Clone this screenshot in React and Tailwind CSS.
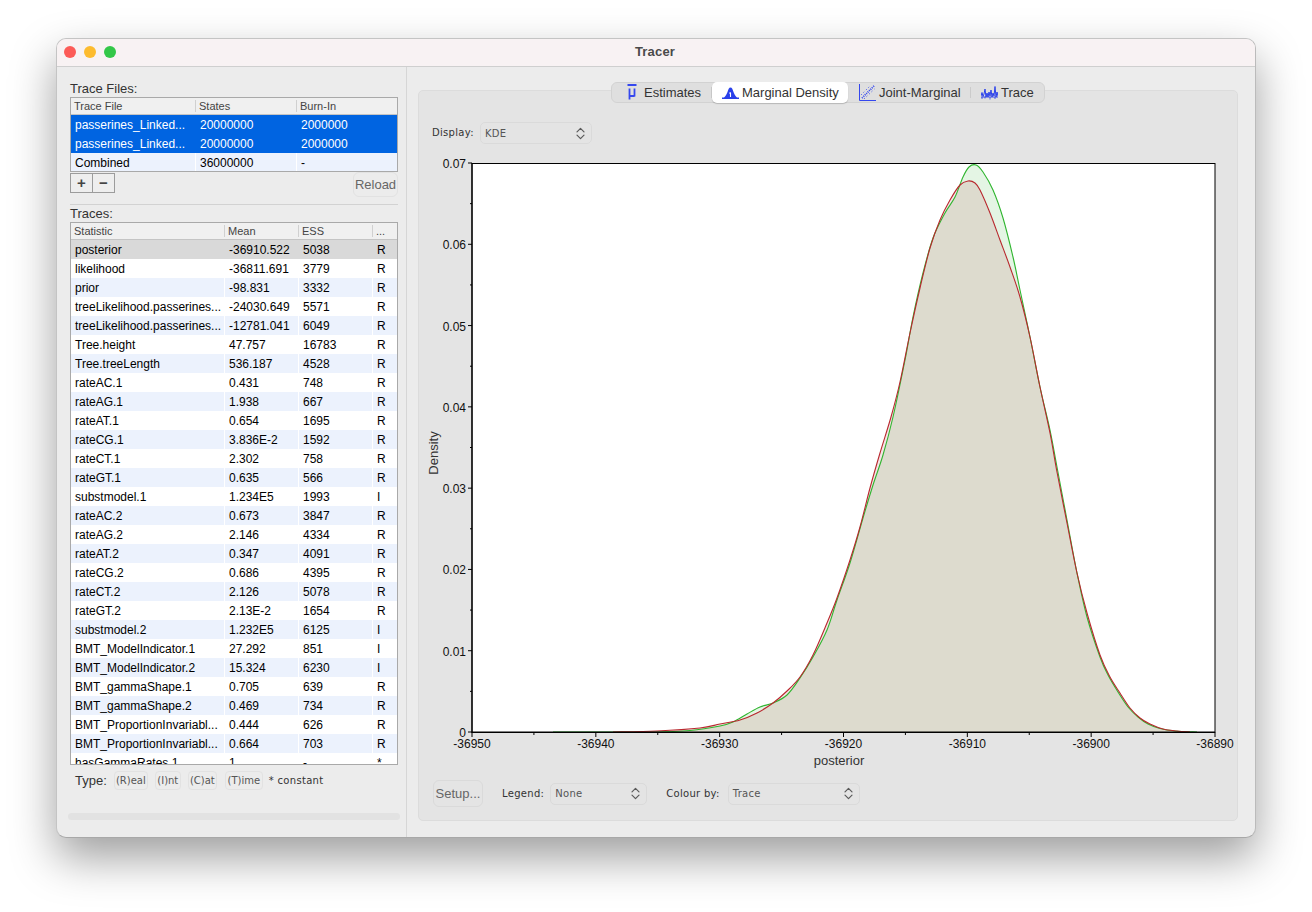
import { Fragment } from 'react'

const FILES = [
  ['passerines_Linked...', '20000000', '2000000'],
  ['passerines_Linked...', '20000000', '2000000'],
  ['Combined', '36000000', '-'],
]

const TRACES = [
  ['posterior', '-36910.522', '5038', 'R'],
  ['likelihood', '-36811.691', '3779', 'R'],
  ['prior', '-98.831', '3332', 'R'],
  ['treeLikelihood.passerines...', '-24030.649', '5571', 'R'],
  ['treeLikelihood.passerines...', '-12781.041', '6049', 'R'],
  ['Tree.height', '47.757', '16783', 'R'],
  ['Tree.treeLength', '536.187', '4528', 'R'],
  ['rateAC.1', '0.431', '748', 'R'],
  ['rateAG.1', '1.938', '667', 'R'],
  ['rateAT.1', '0.654', '1695', 'R'],
  ['rateCG.1', '3.836E-2', '1592', 'R'],
  ['rateCT.1', '2.302', '758', 'R'],
  ['rateGT.1', '0.635', '566', 'R'],
  ['substmodel.1', '1.234E5', '1993', 'I'],
  ['rateAC.2', '0.673', '3847', 'R'],
  ['rateAG.2', '2.146', '4334', 'R'],
  ['rateAT.2', '0.347', '4091', 'R'],
  ['rateCG.2', '0.686', '4395', 'R'],
  ['rateCT.2', '2.126', '5078', 'R'],
  ['rateGT.2', '2.13E-2', '1654', 'R'],
  ['substmodel.2', '1.232E5', '6125', 'I'],
  ['BMT_ModelIndicator.1', '27.292', '851', 'I'],
  ['BMT_ModelIndicator.2', '15.324', '6230', 'I'],
  ['BMT_gammaShape.1', '0.705', '639', 'R'],
  ['BMT_gammaShape.2', '0.469', '734', 'R'],
  ['BMT_ProportionInvariabl...', '0.444', '626', 'R'],
  ['BMT_ProportionInvariabl...', '0.664', '703', 'R'],
  ['hasGammaRates.1', '1', '-', '*'],
]

const GREEN = [
  [553, 732], [653, 732], [690, 730.5], [720, 726], [733, 722], [747, 714], [760, 707], [773, 703],
  [787, 695], [800, 678], [813, 657], [827, 630], [837, 600], [850, 563], [863, 518], [873, 485],
  [883, 455], [893, 417], [905, 360], [913, 317], [923, 273], [933, 238], [945, 213], [955, 197],
  [963, 177], [969, 167], [976, 165], [983, 172], [993, 190], [1003, 218], [1013, 257], [1020, 290],
  [1030, 337], [1040, 387], [1050, 430], [1057, 467], [1067, 520], [1077, 573], [1087, 617],
  [1100, 657], [1108, 675], [1118, 692], [1128, 707], [1138, 717], [1148, 724], [1160, 728.5],
  [1175, 731], [1197, 732],
]

const RED = [
  [613, 732], [657, 731], [700, 728], [720, 724], [740, 720], [757, 713], [773, 703], [787, 691],
  [800, 677], [813, 655], [827, 623], [837, 598], [850, 560], [860, 527], [870, 488], [880, 453],
  [891, 417], [900, 382], [910, 333], [920, 288], [930, 248], [940, 220], [950, 200], [960, 185],
  [968, 181], [975, 183], [980, 190], [990, 213], [1000, 240], [1010, 267], [1020, 297], [1030, 337],
  [1040, 387], [1050, 433], [1057, 472], [1067, 523], [1077, 573], [1087, 613], [1100, 655],
  [1110, 677], [1120, 693], [1130, 708], [1140, 718], [1150, 724], [1163, 729], [1177, 731], [1190, 732],
]

// catmull-rom through the sampled points
function smooth(pts) {
  let d = `M${pts[0][0]} ${pts[0][1]}`
  for (let i = 0; i < pts.length - 1; i++) {
    const p0 = pts[i - 1] || pts[i]
    const p1 = pts[i]
    const p2 = pts[i + 1]
    const p3 = pts[i + 2] || p2
    const c1x = p1[0] + (p2[0] - p0[0]) / 6
    const c1y = p1[1] + (p2[1] - p0[1]) / 6
    const c2x = p2[0] - (p3[0] - p1[0]) / 6
    const c2y = p2[1] - (p3[1] - p1[1]) / 6
    d += `C${c1x} ${c1y} ${c2x} ${c2y} ${p2[0]} ${p2[1]}`
  }
  return d
}

const X_TICKS = [-36950, -36940, -36930, -36920, -36910, -36900, -36890]
const xPos = v => 472 + ((v + 36950) / 60) * 743
const yPos = v => 732 - (v / 0.07) * 569

function Chevrons() {
  return (
    <svg width="9" height="13" viewBox="0 0 9 13" fill="none" stroke="#5a5a5a" strokeWidth="1.2" strokeLinecap="round" strokeLinejoin="round">
      <path d="M1 4.8 4.5 1.3 8 4.8" />
      <path d="M1 8.2 4.5 11.7 8 8.2" />
    </svg>
  )
}

function Select({ value, className }) {
  return (
    <div className={`flex h-[22px] items-center justify-between rounded-[5px] border border-[#dadada] pl-[4px] pr-[6px] font-['DejaVu_Sans',sans-serif] text-[10px] tracking-[0.3px] text-[#555] ${className}`}>
      <span>{value}</span>
      <Chevrons />
    </div>
  )
}

function Small({ children }) {
  return <span className="block font-['DejaVu_Sans',sans-serif] text-[10px] leading-[14px] tracking-[0.3px] text-[#333]">{children}</span>
}

function TypeBtn({ label, w }) {
  return (
    <div className={`flex h-[19px] items-center justify-center rounded-[4px] border border-[#e2e2e2] font-['DejaVu_Sans',sans-serif] text-[10px] text-[#555] ${w}`}>
      {label}
    </div>
  )
}

function HeaderRow({ cols, labels }) {
  return (
    <div className="flex h-[17px] shrink-0 border-b border-[#c4c4c4] bg-[#f0f0f0] text-[11px] text-[#444]">
      {labels.map((l, i) => (
        <div key={i} className={`flex items-center pl-[3px] ${cols[i]} ${i < labels.length - 1 ? 'relative' : ''}`}>
          {l}
          {i < labels.length - 1 && <span className="absolute right-0 top-[2px] h-[12px] w-px bg-[#d0d0d0]" />}
        </div>
      ))}
    </div>
  )
}

function Row({ cols, cells, tone }) {
  const bg = tone === 'blue' ? 'bg-[#0064e1] text-white' : tone === 'sel' ? 'bg-[#d9d9d9] text-black' : tone === 'alt' ? 'bg-[#ecf2fd] text-black' : 'bg-white text-black'
  const sep = tone === 'alt' || tone === 'plain' ? 'border-r border-white' : ''
  return (
    <div className={`flex h-[19px] shrink-0 items-center text-[12px] ${bg}`}>
      {cells.map((c, i) => (
        <div key={i} className={`flex h-full items-center whitespace-nowrap pl-[4px] ${cols[i]} ${i < cells.length - 1 ? sep : ''}`}>
          {c}
        </div>
      ))}
    </div>
  )
}

function MuIcon() {
  return (
    <svg width="10" height="17" viewBox="0 0 10 17" fill="none" stroke="#3548ee">
      <path d="M0.5 1H9.5" strokeWidth="2" />
      <path d="M2.5 4.5V15.5M7.5 4.5V12.5M2.5 12H7.5" strokeWidth="1.8" />
    </svg>
  )
}

function DensityIcon() {
  return (
    <svg width="17" height="12" viewBox="0 0 17 12">
      <path d="M0 10.5H2C3.5 9.5 4.5 7.5 5.5 5 6.3 2.5 7 0.5 8.5 0.5 10 0.5 10.7 2.5 11.5 5 12.5 7.5 13.5 9.5 15 10.5H17V12H0Z" fill="#2a40ea" />
      <path d="M8.5 5.5V10M7.5 6.5 8.5 5.5" stroke="#fff" strokeWidth="1.1" fill="none" />
    </svg>
  )
}

function JointIcon() {
  return (
    <svg width="17" height="17" viewBox="0 0 17 17" fill="none" stroke="#3548ee">
      <path d="M0.5 0V16.5H17" strokeWidth="1" />
      <path d="M3 14 15.5 1.5" strokeWidth="1.8" strokeDasharray="1 1" />
      <path d="M5 15 15.5 5M2 11 11 2" strokeWidth="1" strokeDasharray="1 2.5" />
    </svg>
  )
}

function TraceIcon() {
  return (
    <svg width="17" height="14" viewBox="0 0 17 14" fill="none" stroke="#2a40ea" strokeWidth="1">
      <path d="M0 10 1 6.5 2 10.5 3 8 4 3 5 11 6 7 7 11 8 6 9 10 10 4 11 11 12 7 13 10 14 0.5 15 11 16 6 17 10" />
      <path d="M0 11H17" strokeWidth="0.9" />
      <path d="M1 11V13M4 11V12.5M9 11V13.5M14 11V13" strokeWidth="0.8" />
    </svg>
  )
}

function Tabs() {
  return (
    <div className="relative z-10 flex h-[21px] w-[434px] self-center rounded-[6px] border border-[#d2d2d2] bg-[#dfdfdf] text-[13px] text-[#333]">
      <div className="flex w-[99px] items-center gap-[7px] pl-[15px]">
        <MuIcon />
        <span>Estimates</span>
      </div>
      <div className="my-[4px] w-px bg-[#cbcbcb]" />
      <div className="-my-px flex h-[21px] w-[136px] items-center gap-[3px] rounded-[5px] bg-white pl-[10px] shadow-[0_1px_1px_rgba(0,0,0,0.2)]">
        <DensityIcon />
        <span>Marginal Density</span>
      </div>
      <div className="flex w-[122px] items-center gap-[3px] pl-[11px]">
        <JointIcon />
        <span>Joint-Marginal</span>
      </div>
      <div className="my-[4px] w-px bg-[#cbcbcb]" />
      <div className="flex flex-1 items-center gap-[3px] pl-[10px]">
        <TraceIcon />
        <span>Trace</span>
      </div>
    </div>
  )
}

function Chart() {
  const yMajor = [0, 0.01, 0.02, 0.03, 0.04, 0.05, 0.06, 0.07]
  const yMinor = [0.005, 0.015, 0.025, 0.035, 0.045, 0.055, 0.065]
  const xMinor = [-36945, -36935, -36925, -36915, -36905, -36895]
  return (
    <svg width="810" height="625" viewBox="426 150 810 625" className="ml-[7px] mt-[6px] block font-['Liberation_Sans',sans-serif]">
      <rect x="472" y="163" width="743" height="569" fill="#fff" />
      <path d={`${smooth(GREEN)}V732H553Z`} fill="#30b030" fillOpacity="0.13" />
      <path d={`${smooth(RED)}V732H613Z`} fill="#aa2035" fillOpacity="0.12" />
      <path d={smooth(GREEN)} fill="none" stroke="#2fb52f" strokeWidth="1.1" />
      <path d={smooth(RED)} fill="none" stroke="#b8282e" strokeWidth="1.1" />
      <rect x="472" y="163.5" width="743" height="568.5" fill="none" stroke="#000" strokeWidth="1" />
      <path d="M472 732.5H1215M472 163V733" stroke="#000" strokeWidth="1.2" />
      {yMajor.map(v => (
        <Fragment key={v}>
          <path d={`M468 ${yPos(v)}H472`} stroke="#000" />
          <text x="466" y={yPos(v) + 5} textAnchor="end" fontSize="12" fill="#111">{v}</text>
        </Fragment>
      ))}
      {yMinor.map(v => <path key={v} d={`M470 ${yPos(v)}H472`} stroke="#000" />)}
      {X_TICKS.map(v => (
        <Fragment key={v}>
          <path d={`M${xPos(v)} 732V737`} stroke="#000" />
          <text x={xPos(v)} y="748" textAnchor="middle" fontSize="12" fill="#111">{v}</text>
        </Fragment>
      ))}
      {xMinor.map(v => <path key={v} d={`M${xPos(v)} 732V735`} stroke="#000" />)}
      <text x="839" y="765" textAnchor="middle" fontSize="13" fill="#333">posterior</text>
      <text transform="translate(438 453) rotate(-90)" textAnchor="middle" fontSize="13" fill="#333">Density</text>
    </svg>
  )
}

export default function App() {
  const fileCols = ['w-[125px]', 'w-[101px]', 'flex-1']
  const traceCols = ['w-[154px]', 'w-[74px]', 'w-[74px]', 'flex-1']
  return (
    <div className="h-[912px] overflow-hidden bg-white pl-[56px] pt-[38px] font-['Liberation_Sans',sans-serif]">
      <div className="flex h-[800px] w-[1200px] flex-col overflow-hidden rounded-[10px] border border-[#c4c4c4] border-b-[#a8a8a8] border-r-[#bbbbbb] bg-[#ececec] shadow-[0_20px_45px_rgba(0,0,0,0.38)]">
        {/* barra de titulo */}
        <div className="flex h-[28px] shrink-0 items-center border-b border-[#cfcfcf] bg-[#f8f2f3] pb-[2px] pl-[7px]">
          <div className="flex gap-[8px]">
            <span className="h-[12px] w-[12px] rounded-full bg-[#fc5b57]" />
            <span className="h-[12px] w-[12px] rounded-full bg-[#fdbb2e]" />
            <span className="h-[12px] w-[12px] rounded-full bg-[#33c748]" />
          </div>
          <div className="flex-1 pr-[61px] text-center text-[13px] font-bold tracking-[0.2px] text-[#4a4a4a]">Tracer</div>
        </div>

        <div className="flex flex-1">
          {/* panel izquierdo */}
          <div className="w-[350px] shrink-0 border-r border-[#d6d6d6] pl-[13px] pt-[14px]">
            <div className="h-[16px] text-[13px] leading-[16px] text-[#333]">Trace Files:</div>
            <div className="h-[75px] w-[328px] overflow-hidden border border-[#a9a9a9]">
              <HeaderRow cols={fileCols} labels={['Trace File', 'States', 'Burn-In']} />
              {FILES.map((f, i) => (
                <Row key={i} cols={fileCols} cells={f} tone={i < 2 ? 'blue' : 'alt'} />
              ))}
            </div>
            <div className="flex h-[25px] w-[328px] justify-between">
              <div className="mt-[1px] flex h-[20px] w-[45px] border border-[#9c9c9c] bg-[#eeeeee] text-[#444]">
                <div className="flex w-[22px] items-center justify-center border-r border-[#9c9c9c] text-[15px] font-bold">+</div>
                <div className="flex flex-1 items-center justify-center text-[15px] font-bold">−</div>
              </div>
              <div className="flex w-[45px] items-center justify-center rounded-[6px] border border-[#e2e2e2] text-[13px] text-[#666]">Reload</div>
            </div>
            <div className="mt-[7px] h-px w-[328px] bg-[#d2d2d2]" />
            <div className="h-[16px] text-[13px] leading-[18px] text-[#333]">Traces:</div>
            <div className="mt-px flex h-[543px] w-[328px] flex-col overflow-hidden border border-[#a9a9a9]">
              <HeaderRow cols={traceCols} labels={['Statistic', 'Mean', 'ESS', '...']} />
              {TRACES.map((t, i) => (
                <Row key={i} cols={traceCols} cells={t} tone={i === 0 ? 'sel' : i % 2 ? 'plain' : 'alt'} />
              ))}
            </div>
            <div className="ml-[5px] mt-[6px] flex items-center">
              <span className="mr-[7px] text-[13px] text-[#333]">Type:</span>
              <TypeBtn label="(R)eal" w="w-[34px]" />
              <div className="w-[7px]" />
              <TypeBtn label="(I)nt" w="w-[26px]" />
              <div className="w-[7px]" />
              <TypeBtn label="(C)at" w="w-[29px]" />
              <div className="w-[8px]" />
              <TypeBtn label="(T)ime" w="w-[38px]" />
              <span className="ml-[6px] font-['DejaVu_Sans',sans-serif] text-[10px] tracking-[0.3px] text-[#333]">* constant</span>
            </div>
            <div className="-ml-[2px] mt-[22px] h-[7px] w-[332px] rounded-full bg-[#e2e2e2]" />
          </div>

          {/* panel derecho */}
          <div className="flex flex-1 flex-col pl-[11px] pt-[15px]">
            <div className="flex w-[820px] flex-col">
              <Tabs />
              <div className="-mt-[13px] h-[731px] w-[820px] rounded-[5px] border border-[#dcdcdc] bg-[#e4e4e4] pt-[31px]">
                <div className="flex h-[22px] items-center pl-[13px]">
                  <Small>Display:</Small>
                  <Select value="KDE" className="ml-[6px] w-[112px]" />
                </div>
                <Chart />
                <div className="mt-[5px] flex h-[27px] items-center pl-[14px]">
                  <div className="flex h-[27px] w-[50px] items-center justify-center rounded-[6px] border border-[#dadada] text-[13px] text-[#666]">Setup...</div>
                  <div className="ml-[19px]"><Small>Legend:</Small></div>
                  <Select value="None" className="ml-[6px] w-[97px]" />
                  <div className="ml-[19px]"><Small>Colour by:</Small></div>
                  <Select value="Trace" className="ml-[8px] w-[132px]" />
                </div>
              </div>
            </div>
          </div>
        </div>
      </div>
    </div>
  )
}
